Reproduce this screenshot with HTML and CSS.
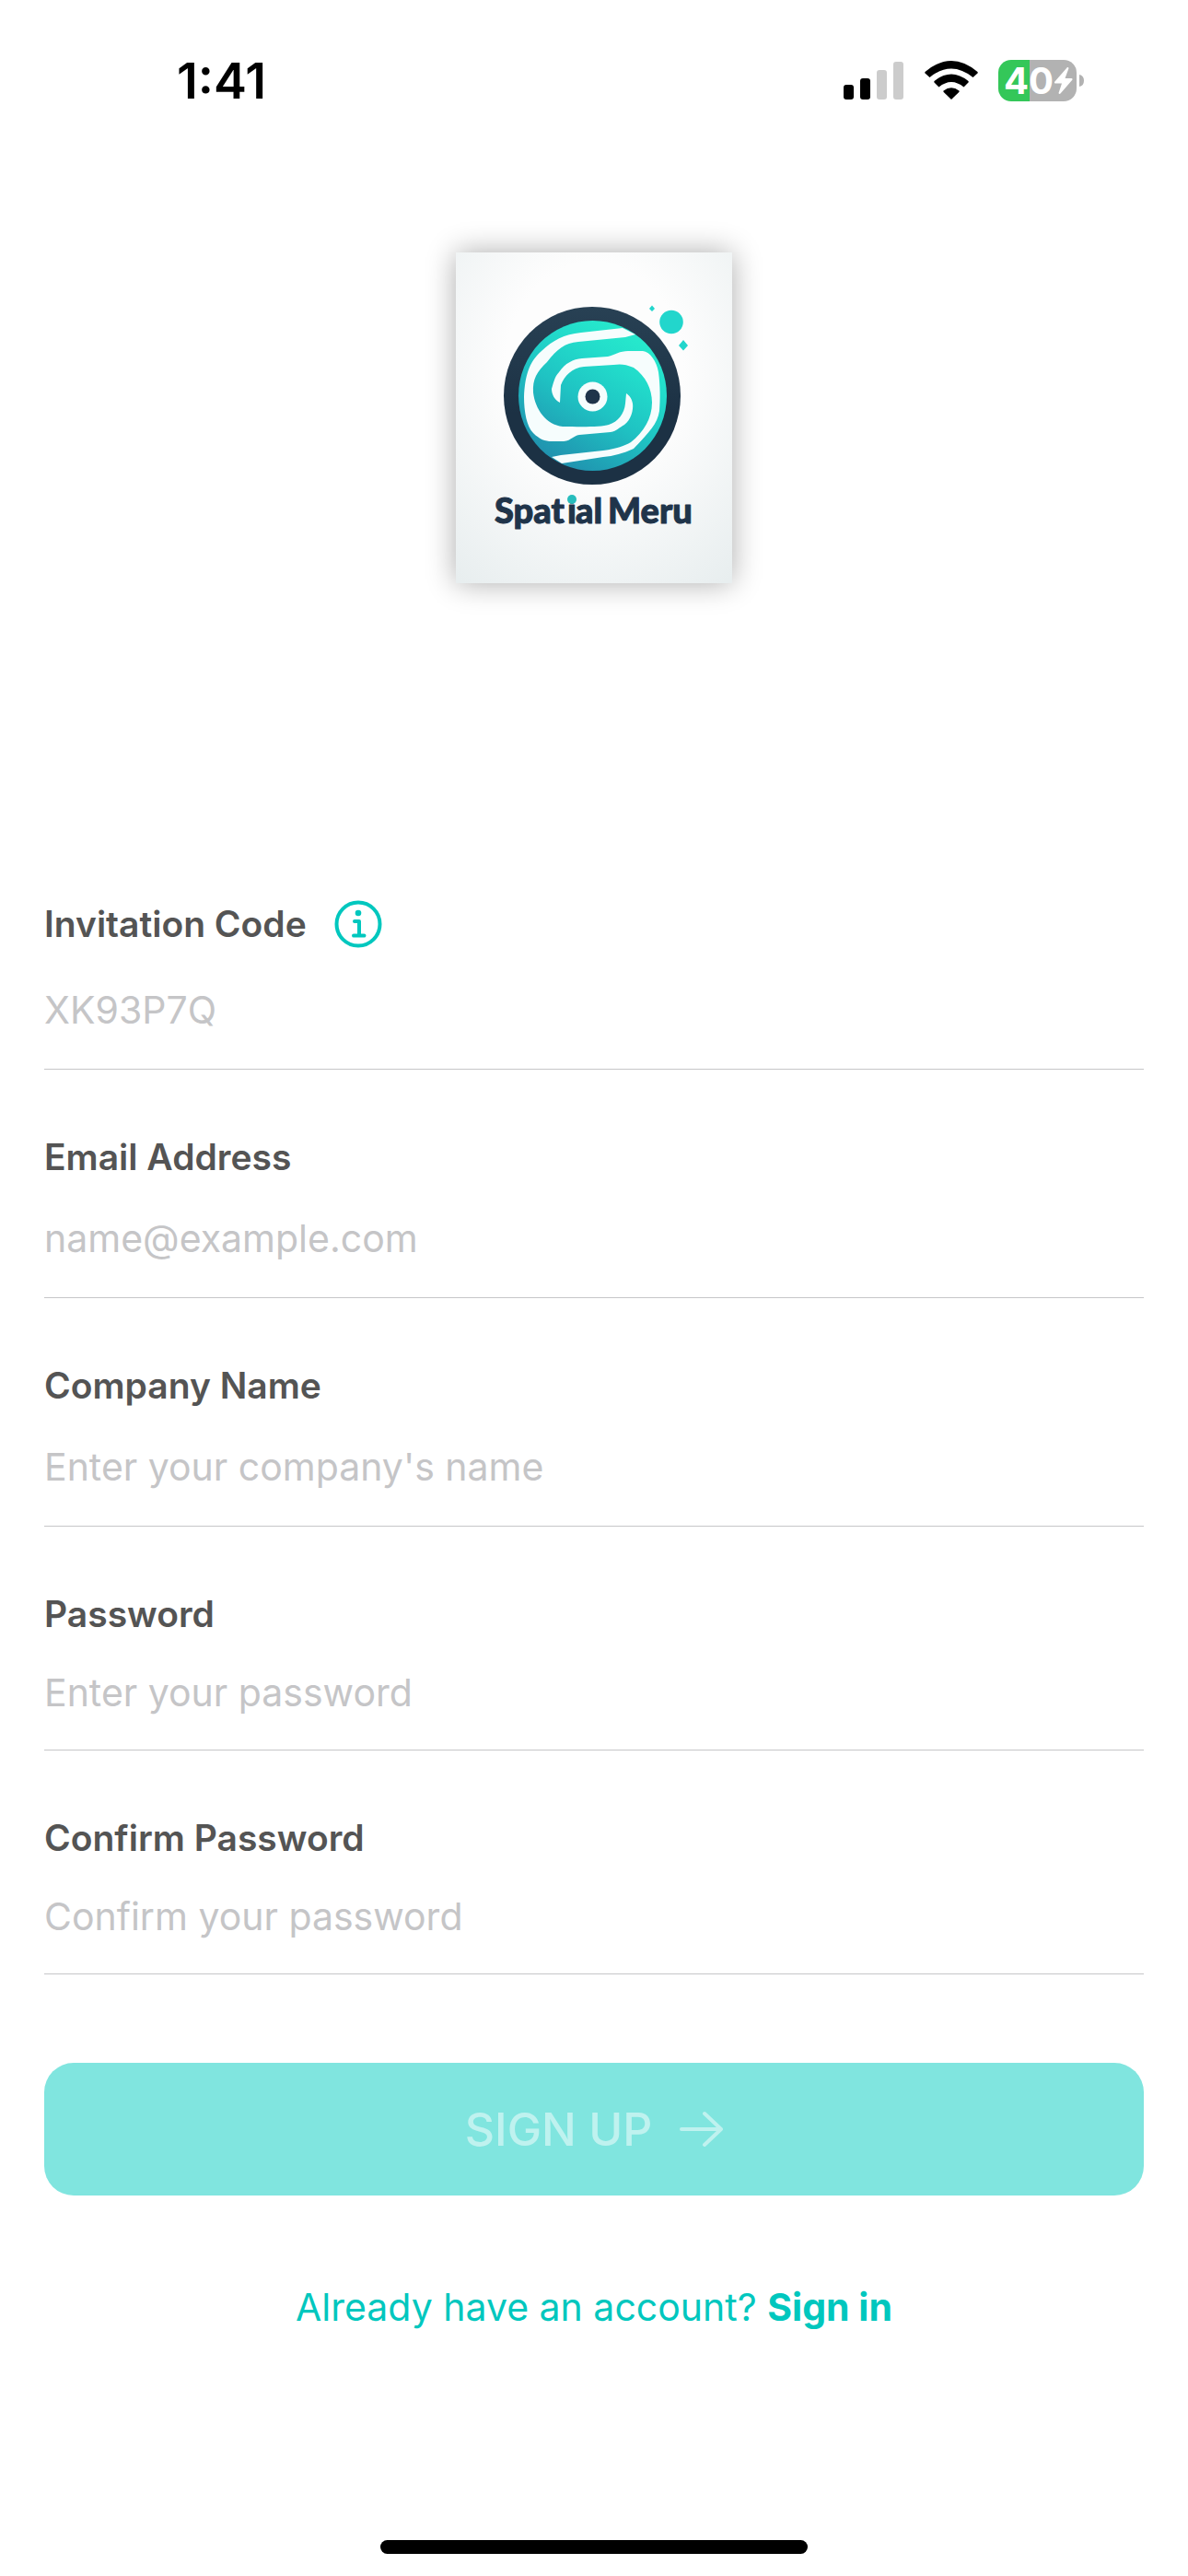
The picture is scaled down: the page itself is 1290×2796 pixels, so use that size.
FILE: index.html
```html
<!DOCTYPE html>
<html lang="en">
<head>
  <meta charset="UTF-8" />
  <meta name="viewport" content="width=device-width, initial-scale=1.0"/>
  <title>Sign Up</title>
  <link rel="stylesheet" href="styles.css">
</head>
<body>
  <header class="status-bar">
    <span class="time">1:41</span>
    <div class="status-icons">
      <svg class="signal" width="66" height="46" viewBox="0 0 66 46">
        <rect x="0" y="27" width="11" height="16" rx="3"/>
        <rect x="18" y="20" width="11" height="23" rx="3"/>
        <rect x="36" y="11" width="11" height="32" rx="3" fill="#ccc"/>
        <rect x="54" y="2" width="11" height="41" rx="3" fill="#ccc"/>
      </svg>
      <svg class="wifi" width="58" height="46" viewBox="0 0 58 46">
        <path d="M0.5 13Q29 -11 57.5 13Q58 14 57.5 14.6L52.5 19Q29 0 5.5 19L0.5 14.6Q0 14 0.5 13Z"/>
        <path d="M10.5 23Q29 8 47.5 23Q48 24 47.5 24.5L42.5 29.5Q29 18.5 15.5 29.5L10.5 24.5Q10 24 10.5 23Z"/>
        <path d="M20.5 33.5Q29 27 37.5 33.5Q38 34.3 37.3 35L29 43L20.7 35Q20 34.3 20.5 33.5Z"/>
      </svg>
      <svg class="battery" width="94" height="46" viewBox="0 0 94 46">
        <path d="M14 0H34V45H14A14 14 0 0 1 0 31V14A14 14 0 0 1 14 0Z" fill="#34c759"/>
        <path d="M34 0H71A14 14 0 0 1 85 14V31A14 14 0 0 1 71 45H34Z" fill="#b2b2b2"/>
        <path d="M88 16Q93 17 93 22.5T88 29Z" fill="#b2b2b2"/>
        <text x="6" y="37" class="battery-level">40</text>
        <path d="M75 8L61 24Q60.5 25.5 62 25.5H69L65.5 36Q66 37.5 67.5 36.5L80.5 21.5Q81 20 79.5 20H72.5L76.5 9Q76 7.5 75 8Z" fill="#fff"/>
      </svg>
    </div>
  </header>

  <main class="signup">
    <svg class="logo" width="300" height="359" viewBox="0 0 300 359" role="img" aria-label="Spatial Menu">
      <defs>
        <radialGradient id="paper" cx="0.5" cy="0.35" r="0.8">
          <stop offset="0.4" stop-color="#fdfdfd"/>
          <stop offset="1" stop-color="#e8eeef"/>
        </radialGradient>
        <linearGradient id="teal" x1="0.2" y1="1" x2="0.75" y2="0.1">
          <stop offset="0" stop-color="#2089ab"/>
          <stop offset="0.5" stop-color="#1fc3c3"/>
          <stop offset="0.8" stop-color="#22dccb"/>
          <stop offset="1" stop-color="#26e8cc"/>
        </linearGradient>
        <linearGradient id="navy" x1="0" y1="0" x2="0" y2="1">
          <stop offset="0" stop-color="#284154"/>
          <stop offset="0.6" stop-color="#1c3144"/>
        </linearGradient>
      </defs>
      <rect width="300" height="359" fill="url(#paper)"/>
      <ellipse cx="148" cy="155.5" rx="96" ry="96.5" fill="url(#navy)"/>
      <ellipse cx="148.5" cy="155.5" rx="80.5" ry="81.5" fill="url(#teal)"/>
      <g fill="#f6fdfd">
        <path d="M181 82L136 87C117 89 106 95 93 107C79 119 75 135 74 157C74 173 77 189 84 196C91 203 97 205 104 205H117C126 204 127 199 134 198L168 195C175 194 177 190 183 187C190 182 193 171 192 164C191 158 188 155 185 153L184 164C183 175 176 184 166 187C158 190 130 189 116 189C98 187 86 170 84 152C83 138 88 129 99 119C110 105 118 98 133 97L184 92L195 89Z"/>
        <path d="M113 163C107 160 104 154 104 148C106 142 107 135 112 130C119 120 127 116 137 115L165 113C173 111 178 107 187 107H203C211 108 218 118 220 130C222 145 222 160 221 172C219 186 210 195 193 213C182 218 171 221 160 222L115 229L104 222L114 220L160 215C175 213 183 210 190 206C204 195 213 180 213 163C213 148 206 134 193 125C184 121 178 121 171 122L139 124C126 125 118 134 114 144Z"/>
        <circle cx="148.5" cy="156.5" r="16"/>
      </g>
      <circle cx="148.5" cy="156.5" r="8" fill="#1f344a"/>
      <circle cx="234" cy="75.5" r="12.8" fill="#22d6cc"/>
      <path d="M213 57.5L216 61L213 64L210 61ZM247 95L252 101L247 106.5L242 101Z" fill="#22d6cc"/>
      <text y="294" class="logo-text"><tspan x="42">Spat</tspan><tspan x="121">i</tspan><tspan x="130">al</tspan> <tspan x="165">Meru</tspan></text>
      <circle cx="126" cy="268" r="5" fill="#28bdbd"/>
    </svg>

    <form class="signup-form">
      <div class="field">
        <div class="label-row">
          <label for="invitationCode">Invitation Code</label>
          <button type="button" class="info-btn" aria-label="About invitation codes">
            <svg width="52" height="52" viewBox="0 0 52 52" fill="none" stroke="#00c7be" stroke-width="4" stroke-linecap="round" stroke-linejoin="round">
              <circle cx="26" cy="26" r="23.5"/>
              <circle cx="26" cy="14" r="3.3" fill="#00c7be" stroke="none"/>
              <path d="M22 23H27V38M21 38.5H32.500"/>
            </svg>
          </button>
        </div>
        <input id="invitationCode" type="text" placeholder="XK93P7Q" />
      </div>

      <div class="field">
        <label for="email">Email Address</label>
        <input id="email" type="email" placeholder="name@example.com" />
      </div>

      <div class="field">
        <label for="company">Company Name</label>
        <input id="company" type="text" placeholder="Enter your company's name" />
      </div>

      <div class="field">
        <label for="password">Password</label>
        <input id="password" type="password" placeholder="Enter your password" />
      </div>

      <div class="field">
        <label for="confirmPassword">Confirm Password</label>
        <input id="confirmPassword" type="password" placeholder="Confirm your password" />
      </div>

      <button type="submit" class="submit-btn" disabled>
        SIGN UP
        <svg width="47" height="40" viewBox="0 0 47 40" fill="none" stroke="currentColor" stroke-width="4" stroke-linecap="round" stroke-linejoin="round">
          <path d="M2 20H45M27 3L45 20L27 37"/>
        </svg>
      </button>
    </form>

    <a class="signin-link" href="#">Already have an account? <b>Sign in</b></a>
  </main>

  <div class="home-indicator"></div>
</body>
</html>
```

FILE: styles.css
```css
* {
  margin: 0;
  padding: 0;
  box-sizing: border-box;
  font-family: Inter, 'Liberation Sans', sans-serif;
}

body {
  background-color: #fff;
  min-height: 100vh;
  display: flex;
  flex-direction: column;
}

.status-bar {
  display: flex;
  align-items: center;
  justify-content: space-between;
  padding: 56px 112px 0 192px;
}

.time {
  font-size: 54px;
  font-weight: 600;
  line-height: 64px;
}

.status-icons {
  display: flex;
  align-items: center;
  gap: 22px;
}

.battery {
  overflow: visible;
}

.battery-level {
  font-size: 40px;
  font-weight: 700;
  fill: #fff;
}

.signup {
  display: flex;
  flex-direction: column;
  align-items: center;
  padding: 154px 48px 0;
}

.logo {
  box-shadow: 0 0 30px rgba(0, 0, 0, 0.33);
}

.logo-text,
.logo-text tspan {
  font-family: Lato, sans-serif;
  font-size: 38px;
  font-weight: 900;
  fill: #1f344a;
  stroke: #1f344a;
  stroke-width: 1px;
  stroke-linejoin: round;
}

.signup-form {
  width: 100%;
  margin-top: 344px;
  display: flex;
  flex-direction: column;
  gap: 72px;
}

.field {
  display: flex;
  flex-direction: column;
}

.label-row {
  display: flex;
  align-items: center;
  gap: 30px;
  margin-bottom: 2px;
}

label {
  font-size: 39px;
  font-weight: 600;
  line-height: 46px;
  color: #545454;
}

.info-btn {
  width: 52px;
  height: 52px;
  border: none;
  background: none;
  cursor: pointer;
}

input {
  width: 100%;
  height: 130px;
  border: none;
  border-bottom: 1px solid #c6c6c8;
  outline: none;
  background: none;
  font-size: 41px;
  color: #000;
}

input[type="password"] {
  height: 125px;
}

input::placeholder {
  color: #c5c5c7;
}

input:focus {
  border-bottom-color: #00c7be;
}

.submit-btn {
  height: 144px;
  margin-top: 24px;
  display: flex;
  align-items: center;
  justify-content: center;
  gap: 30px;
  border: none;
  border-radius: 32px;
  background-color: #80e5df;
  color: #bff2ef;
  font-size: 50px;
  font-weight: 500;
}

.signin-link {
  margin-top: 96px;
  font-size: 41px;
  line-height: 50px;
  color: #00c7be;
  text-decoration: none;
}

.home-indicator {
  width: 36%;
  height: 15px;
  margin: auto auto 24px;
  border-radius: 8px;
  background-color: #000;
}
```
